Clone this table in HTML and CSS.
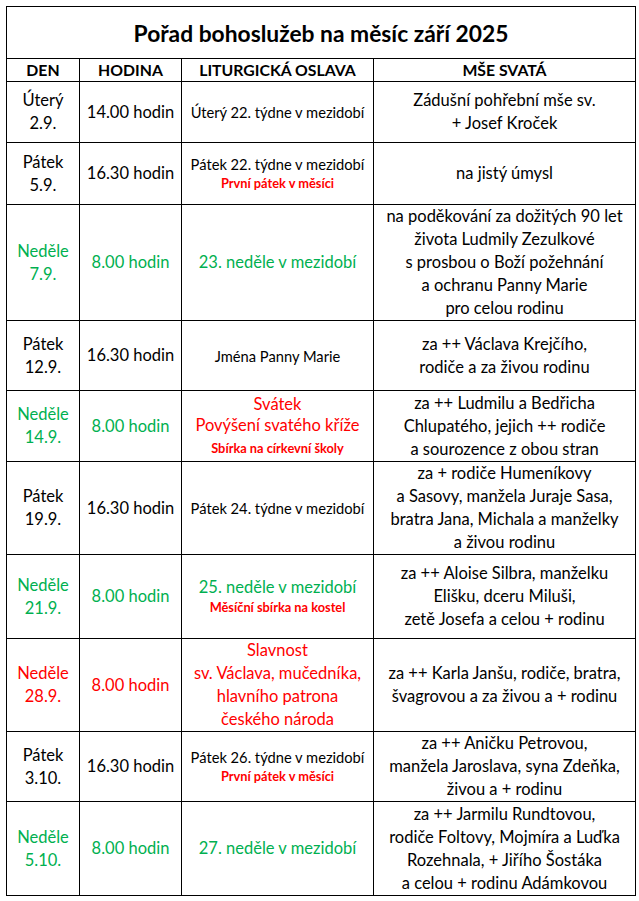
FILE: index.html
```html
<!DOCTYPE html>
<html lang="cs">
<head>
<meta charset="utf-8">
<title>Pořad bohoslužeb</title>
<link rel="stylesheet" href="styles.css">
</head>
<body>
<table class="schedule">
  <colgroup>
    <col class="c-day"><col class="c-hour"><col class="c-lit"><col class="c-mass">
  </colgroup>
  <thead>
    <tr class="r-title"><th colspan="4" class="title">Pořad bohoslužeb na měsíc září 2025</th></tr>
    <tr class="r-head"><th>DEN</th><th>HODINA</th><th>LITURGICKÁ OSLAVA</th><th>MŠE SVATÁ</th></tr>
  </thead>
  <tbody>
    <tr class="r1">
      <td>Úterý<br>2.9.</td>
      <td>14.00 hodin</td>
      <td class="lit">Úterý 22. týdne v mezidobí</td>
      <td>Zádušní pohřební mše sv.<br>+ Josef Kroček</td>
    </tr>
    <tr class="r2">
      <td>Pátek<br>5.9.</td>
      <td>16.30 hodin</td>
      <td class="lit">Pátek 22. týdne v mezidobí<br><span class="note">První pátek v měsíci</span></td>
      <td>na jistý úmysl</td>
    </tr>
    <tr class="r3 green">
      <td>Neděle<br>7.9.</td>
      <td>8.00 hodin</td>
      <td>23. neděle v mezidobí</td>
      <td class="black">na poděkování za dožitých 90 let<br>života Ludmily Zezulkové<br>s prosbou o Boží požehnání<br>a ochranu Panny Marie<br>pro celou rodinu</td>
    </tr>
    <tr class="r4">
      <td>Pátek<br>12.9.</td>
      <td>16.30 hodin</td>
      <td class="lit">Jména Panny Marie</td>
      <td>za ++ Václava Krejčího,<br>rodiče a za živou rodinu</td>
    </tr>
    <tr class="r5 green">
      <td>Neděle<br>14.9.</td>
      <td>8.00 hodin</td>
      <td class="red">Svátek<br>Povýšení svatého kříže<br><span class="note">Sbírka na církevní školy</span></td>
      <td class="black">za ++ Ludmilu a Bedřicha<br>Chlupatého, jejich ++ rodiče<br>a sourozence z obou stran</td>
    </tr>
    <tr class="r6">
      <td>Pátek<br>19.9.</td>
      <td>16.30 hodin</td>
      <td class="lit">Pátek 24. týdne v mezidobí</td>
      <td>za + rodiče Humeníkovy<br>a Sasovy, manžela Juraje Sasa,<br>bratra Jana, Michala a manželky<br>a živou rodinu</td>
    </tr>
    <tr class="r7 green">
      <td>Neděle<br>21.9.</td>
      <td>8.00 hodin</td>
      <td class="lit-big">25. neděle v mezidobí<br><span class="note">Měsíční sbírka na kostel</span></td>
      <td class="black">za ++ Aloise Silbra, manželku<br>Elišku, dceru Miluši,<br>zetě Josefa a celou + rodinu</td>
    </tr>
    <tr class="r8 red">
      <td>Neděle<br>28.9.</td>
      <td>8.00 hodin</td>
      <td>Slavnost<br>sv. Václava, mučedníka,<br>hlavního patrona<br>českého národa</td>
      <td class="black">za ++ Karla Janšu, rodiče, bratra,<br>švagrovou a za živou a + rodinu</td>
    </tr>
    <tr class="r9">
      <td>Pátek<br>3.10.</td>
      <td>16.30 hodin</td>
      <td class="lit">Pátek 26. týdne v mezidobí<br><span class="note">První pátek v měsíci</span></td>
      <td>za ++ Aničku Petrovou,<br>manžela Jaroslava, syna Zdeňka,<br>živou a + rodinu</td>
    </tr>
    <tr class="r10 green">
      <td>Neděle<br>5.10.</td>
      <td>8.00 hodin</td>
      <td>27. neděle v mezidobí</td>
      <td class="black">za ++ Jarmilu Rundtovou,<br>rodiče Foltovy, Mojmíra a Luďka<br>Rozehnala, + Jiřího Šostáka<br>a celou + rodinu Adámkovou</td>
    </tr>
  </tbody>
</table>
</body>
</html>
```
FILE: styles.css
```css
html, body {
  margin: 0;
  padding: 0;
  background: #ffffff;
}
body {
  padding: 6px 0 0 6px;
  font-family: Lato, "Liberation Sans", sans-serif;
  color: #000000;
}
.schedule {
  border-collapse: collapse;
  table-layout: fixed;
  width: 629px;
}
.c-day { width: 73px; }
.c-hour { width: 102px; }
.c-lit { width: 192px; }
.c-mass { width: 262px; }

.schedule th,
.schedule td {
  border: 1px solid #000000;
  padding: 0;
  text-align: center;
  vertical-align: middle;
  font-size: 16.5px;
  line-height: 23px;
  font-weight: 400;
}
.schedule th {
  font-weight: 700;
}
.schedule .title {
  font-size: 22.8px;
  line-height: 28px;
}
.r-title { height: 52px; }
.r-head { height: 23px; }
.schedule .r-head th { font-size: 15.8px; line-height: 20px; }
.r1 { height: 61px; }
.r2 { height: 62px; }
.r3 { height: 116px; }
.r4 { height: 70px; }
.r5 { height: 71px; }
.r6 { height: 93px; }
.r7 { height: 84px; }
.r8 { height: 93px; }
.r9 { height: 70px; }
.r10 { height: 94px; }

.green td { color: #00b050; }
.red td, .schedule td.red { color: #ff0000; }
.schedule td.black { color: #000000; }

.schedule td.lit {
  font-size: 14.7px;
  line-height: 18px;
}
.schedule td.red {
  line-height: 21.5px;
}
.schedule td.lit-big {
  line-height: 19px;
}
.note {
  color: #ff0000;
  font-weight: 700;
  font-size: 12.8px;
  line-height: 18px;
}
```
